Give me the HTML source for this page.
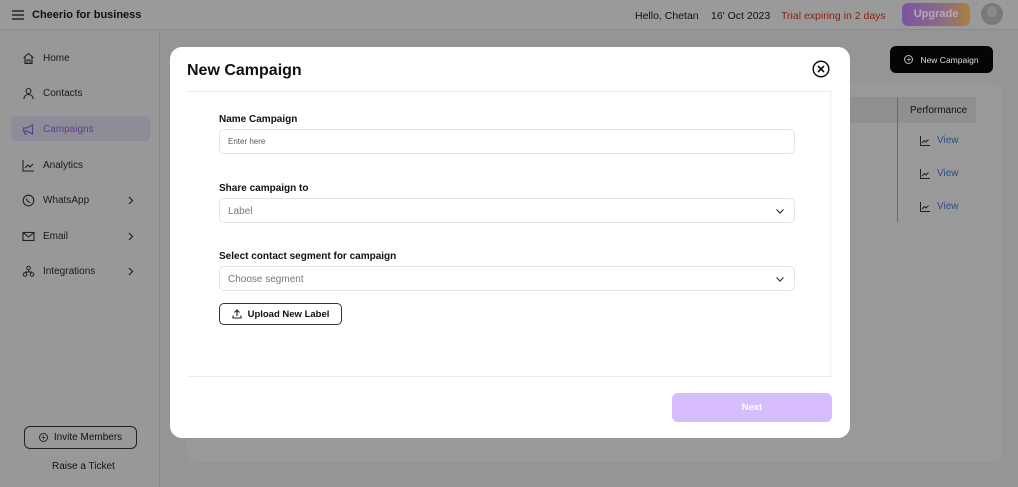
<!DOCTYPE html>
<html><head><meta charset="utf-8"><style>
*{box-sizing:border-box;margin:0;padding:0}
body{width:1018px;height:487px;overflow:hidden;background:#959595;font-family:"Liberation Sans",sans-serif;position:relative;color:#111}
.top{position:absolute;left:0;top:0;width:1018px;height:30px;background:#9a9a9a;border-bottom:1px solid #8c8c8c}
.side{position:absolute;left:0;top:31px;width:160px;height:456px;background:#989898;border-right:1px solid #8c8c8c}
.nav{position:absolute;left:22px;font-size:10px;color:#1a1a1a;display:flex;align-items:center;gap:8px}
.nav svg{width:13px;height:13px}
.chev{position:absolute;left:128px;width:6px;height:9px}
.abs{position:absolute}
.card{position:absolute;left:187px;top:84px;width:816px;height:378px;background:#999;border-radius:10px}
.modal{position:absolute;left:170px;top:47px;width:680px;height:391px;background:#fff;border-radius:12px}
.lbl{position:absolute;left:49px;font-size:10px;font-weight:bold;color:#111}
.inp{position:absolute;left:49px;width:576px;height:25px;border:1px solid #e4e4e4;border-radius:5px;font-size:10px;color:#777;padding:0 8px;display:flex;align-items:center}
.view{position:absolute;left:920px;font-size:10px;color:#2d4f85;display:flex;align-items:center;gap:7px}
</style></head><body>
<div class="top">
 <svg class="abs" style="left:12px;top:10px" width="12" height="10" viewBox="0 0 12 10"><path d="M0 1h12M0 5h12M0 9h12" stroke="#111" stroke-width="1.3"/></svg>
 <div class="abs" style="left:32px;top:9px;font-size:11px;font-weight:bold">Cheerio for business</div>
 <div class="abs" style="left:635px;top:10px;font-size:10.5px">Hello, Chetan</div>
 <div class="abs" style="left:711px;top:10px;font-size:10.5px">16' Oct 2023</div>
 <div class="abs" style="left:781px;top:10px;font-size:10.5px;color:#8b1f12">Trial expiring in 2 days</div>
 <div class="abs" style="left:902px;top:3px;width:68px;height:23px;border-radius:6px;background:linear-gradient(90deg,#7a559f,#8a6a8a 55%,#a8803e);color:#b6a6bf;font-size:11px;font-weight:bold;text-align:center;line-height:23px">Upgrade</div>
 <div class="abs" style="left:981px;top:3px;width:22px;height:22px;border-radius:50%;background:#7a7a7a;overflow:hidden"><div style="position:absolute;left:6px;top:3px;width:10px;height:11px;border-radius:50%;background:#8a8a8a"></div></div>
</div>
<div class="side">
 <div class="abs" style="left:11px;top:85px;width:139px;height:25px;background:#8f8c99;border-radius:5px"></div>
 <div class="nav" style="top:21px"><svg viewBox="0 0 13 13"><path d="M1.5 6L6.5 1.5 11.5 6M3 5v6.5h7V5M5 11.5V8h3v3.5" fill="none" stroke="#222" stroke-width="1.1"/></svg>Home</div>
 <div class="nav" style="top:56px"><svg viewBox="0 0 13 13"><circle cx="6.5" cy="4" r="2.5" fill="none" stroke="#222" stroke-width="1.1"/><path d="M2 12c0-3 2-4.5 4.5-4.5S11 9 11 12" fill="none" stroke="#222" stroke-width="1.1"/></svg>Contacts</div>
 <div class="nav" style="top:92px;color:#5d3f8a"><svg viewBox="0 0 13 13"><path d="M1.5 5h3l6-3v9l-6-3h-3zM3 8v3h2" fill="none" stroke="#5d3f8a" stroke-width="1.2"/></svg>Campaigns</div>
 <div class="nav" style="top:128px"><svg viewBox="0 0 13 13"><path d="M1 1v11h11M3 9l3-3 2 2 3-3" fill="none" stroke="#222" stroke-width="1.1"/></svg>Analytics</div>
 <div class="nav" style="top:163px"><svg viewBox="0 0 13 13"><circle cx="6.5" cy="6.5" r="5.3" fill="none" stroke="#222" stroke-width="1.1"/><path d="M4.5 4.5c0 2 2 4 4 4" fill="none" stroke="#222" stroke-width="1.1"/></svg>WhatsApp</div>
 <svg class="chev" style="top:165px" viewBox="0 0 6 9"><path d="M1 1l3.5 3.5L1 8" fill="none" stroke="#222" stroke-width="1.2"/></svg>
 <div class="nav" style="top:199px"><svg viewBox="0 0 13 13"><rect x="1" y="2.5" width="11" height="8" fill="none" stroke="#222" stroke-width="1.1"/><path d="M1 2.5l5.5 4.5 5.5-4.5" fill="none" stroke="#222" stroke-width="1.1"/></svg>Email</div>
 <svg class="chev" style="top:201px" viewBox="0 0 6 9"><path d="M1 1l3.5 3.5L1 8" fill="none" stroke="#222" stroke-width="1.2"/></svg>
 <div class="nav" style="top:234px"><svg viewBox="0 0 13 13"><circle cx="6.5" cy="3" r="1.8" fill="none" stroke="#222"/><circle cx="3" cy="9.5" r="1.8" fill="none" stroke="#222"/><circle cx="10" cy="9.5" r="1.8" fill="none" stroke="#222"/><path d="M6.5 5v2M3 7h7" stroke="#222"/></svg>Integrations</div>
 <svg class="chev" style="top:236px" viewBox="0 0 6 9"><path d="M1 1l3.5 3.5L1 8" fill="none" stroke="#222" stroke-width="1.2"/></svg>
 <div class="abs" style="left:24px;top:395px;width:113px;height:23px;border:1.3px solid #222;border-radius:6px;font-size:10px;display:flex;align-items:center;justify-content:center;gap:6px"><span style="width:9px;height:9px;border:1px solid #222;border-radius:50%;font-size:8px;line-height:7px;text-align:center">+</span>Invite Members</div>
 <div class="abs" style="left:52px;top:430px;font-size:10px">Raise a Ticket</div>
</div>
<div class="abs" style="left:890px;top:46px;width:103px;height:27px;background:#050505;border-radius:6px;color:#ddd;font-size:8.5px;display:flex;align-items:center;justify-content:center;gap:7px"><span style="width:9px;height:9px;border:1px solid #bbb;border-radius:50%;font-size:8px;line-height:7px;text-align:center">+</span>New Campaign</div>
<div class="card"></div>
<div class="abs" style="left:840px;top:97px;width:136px;height:26px;background:#8f8f8f"></div>
<div class="abs" style="left:897px;top:97px;width:1px;height:125px;background:#6a6a6a"></div>
<div class="abs" style="left:910px;top:105px;font-size:10px">Performance</div>
<div class="view" style="top:135px"><svg width="10" height="10" viewBox="0 0 10 10"><path d="M.5 0v9.5H10M2 7l2.5-2.5 1.5 1.5 2.5-2.5" fill="none" stroke="#222" stroke-width="1"/></svg>View</div>
<div class="view" style="top:168px"><svg width="10" height="10" viewBox="0 0 10 10"><path d="M.5 0v9.5H10M2 7l2.5-2.5 1.5 1.5 2.5-2.5" fill="none" stroke="#222" stroke-width="1"/></svg>View</div>
<div class="view" style="top:201px"><svg width="10" height="10" viewBox="0 0 10 10"><path d="M.5 0v9.5H10M2 7l2.5-2.5 1.5 1.5 2.5-2.5" fill="none" stroke="#222" stroke-width="1"/></svg>View</div>

<div class="modal">
 <div class="abs" style="left:17px;top:15px;font-size:16px;font-weight:bold">New Campaign</div>
 <svg class="abs" style="left:642px;top:13px" width="18" height="18" viewBox="0 0 18 18"><circle cx="9" cy="9" r="7.8" fill="none" stroke="#111" stroke-width="1.5"/><path d="M6 6l6 6M12 6l-6 6" stroke="#111" stroke-width="1.6"/></svg>
 <div class="abs" style="left:17px;top:44px;width:645px;height:1px;background:#eee"></div>
 <div class="abs" style="left:659px;top:45px;width:3px;height:284px;background:#f7f7f7"></div>
 <div class="lbl" style="top:67px">Name Campaign</div>
 <div class="inp" style="top:82px;font-size:8px;color:#555">Enter here</div>
 <div class="lbl" style="top:136px">Share campaign to</div>
 <div class="inp" style="top:151px;padding-top:1px">Label<svg class="abs" style="right:10px;top:10px" width="8" height="5" viewBox="0 0 8 5"><path d="M.5.5l3.5 3.5 3.5-3.5" fill="none" stroke="#333" stroke-width="1.2"/></svg></div>
 <div class="lbl" style="top:204px">Select contact segment for campaign</div>
 <div class="inp" style="top:219px;padding-top:1px">Choose segment<svg class="abs" style="right:10px;top:10px" width="8" height="5" viewBox="0 0 8 5"><path d="M.5.5l3.5 3.5 3.5-3.5" fill="none" stroke="#333" stroke-width="1.2"/></svg></div>
 <div class="abs" style="left:49px;top:256px;width:123px;height:22px;border:1.2px solid #333;border-radius:5px;font-size:9.5px;font-weight:bold;display:flex;align-items:center;justify-content:center;gap:6px"><svg width="10" height="10" viewBox="0 0 10 10"><path d="M5 7V1M2.5 3.5L5 1l2.5 2.5M1 6.5V9h8V6.5" fill="none" stroke="#222" stroke-width="1.1"/></svg>Upload New Label</div>
 <div class="abs" style="left:17px;top:329px;width:645px;height:1px;background:#ececec"></div>
 <div class="abs" style="left:502px;top:346px;width:160px;height:29px;background:#d8bdfd;border-radius:6px;color:#fff;font-size:9.5px;font-weight:bold;text-align:center;line-height:29px">Next</div>
</div>
</body></html>
